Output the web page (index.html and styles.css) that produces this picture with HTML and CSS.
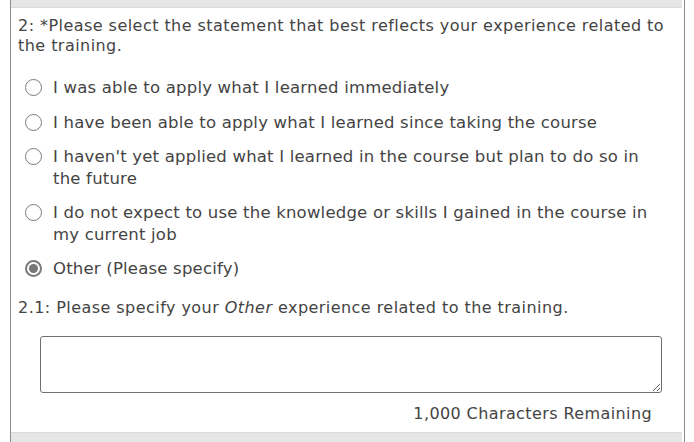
FILE: index.html
```html
<!DOCTYPE html>
<html lang="en">
<head>
    <meta charset="UTF-8">
    <title>Survey question</title>
    <link rel="stylesheet" href="styles.css">
</head>
<body>
    <div class="panel">
        <div class="band"></div>

        <!-- Question 2 -->
        <div class="question">
            <p class="question-title">2: *Please select the statement that best reflects your experience related to the training.</p>

            <div class="choices">
                <label class="choice">
                    <input type="radio" name="q2">
                    <span>I was able to apply what I learned immediately</span>
                </label>
                <label class="choice">
                    <input type="radio" name="q2">
                    <span>I have been able to apply what I learned since taking the course</span>
                </label>
                <label class="choice">
                    <input type="radio" name="q2">
                    <span>I haven't yet applied what I learned in the course but plan to do so in the future</span>
                </label>
                <label class="choice">
                    <input type="radio" name="q2">
                    <span>I do not expect to use the knowledge or skills I gained in the course in my current job</span>
                </label>
                <label class="choice">
                    <input type="radio" name="q2" checked>
                    <span>Other (Please specify)</span>
                </label>
            </div>

            <!-- Sub-question 2.1 -->
            <p class="question-title sub">2.1: Please specify your <em>Other</em> experience related to the training.</p>
            <div class="answer">
                <textarea class="answer-box"></textarea>
                <div class="counter">1,000 Characters Remaining</div>
            </div>
        </div>

        <div class="band bottom"></div>
    </div>
</body>
</html>
```

FILE: styles.css
```css
/* Base */
body {
    margin: 0;
    background-color: #fff;
    color: #444;
}

.panel {
    margin: 0 9px 0 10px;
    min-height: 100vh;
    border-left: 1px solid #8c8c8c;
    border-right: 1px solid #8c8c8c;
    display: flex;
    flex-direction: column;
}

.band {
    height: 7px;
    background-color: #e6e6e6;
    border-bottom: 1px solid #dadada;
    margin-right: 2px;
}

.band.bottom {
    flex: 1;
    border-bottom: none;
    border-top: 1px solid #dadada;
}

/* Question */
.question {
    padding: 0 7px;
}

.question-title {
    margin: 8px 0 0;
    font-family: "DejaVu Sans", sans-serif;
    font-size: 16px;
    letter-spacing: 0.45px;
    line-height: 20px;
}

.question-title.sub {
    margin-top: 18px;
}

.choices {
    margin-top: 21px;
    padding: 0 12px 0 7px;
    display: flex;
    flex-direction: column;
    gap: 13px;
}

.choice {
    display: flex;
    align-items: flex-start;
    gap: 11px;
    font-family: "DejaVu Sans", Verdana, sans-serif;
    font-size: 16.5px;
    letter-spacing: 0.2px;
    line-height: 21.5px;
}

.choice input {
    appearance: none;
    -webkit-appearance: none;
    width: 17px;
    height: 17px;
    margin: 2px 0 0;
    border: 1.5px solid #7a7a7a;
    border-radius: 50%;
    background-color: #fff;
    flex-shrink: 0;
    position: relative;
}

.choice input:checked {
    border: 2px solid #7a7a7a;
}

.choice input:checked::after {
    content: "";
    position: absolute;
    top: 2px;
    left: 2px;
    width: 9px;
    height: 9px;
    border-radius: 50%;
    background-color: #777;
}

/* Free answer */
.answer {
    padding: 18px 15px 0 22px;
}

.answer-box {
    display: block;
    box-sizing: border-box;
    width: 100%;
    height: 57px;
    margin: 0;
    border: 1px solid #6f6f6f;
    border-radius: 3px;
    resize: vertical;
}

.counter {
    margin: 11px 10px 8px 0;
    text-align: right;
    font-family: "DejaVu Sans", sans-serif;
    font-size: 16px;
    letter-spacing: 0.4px;
    line-height: 20px;
}
```
